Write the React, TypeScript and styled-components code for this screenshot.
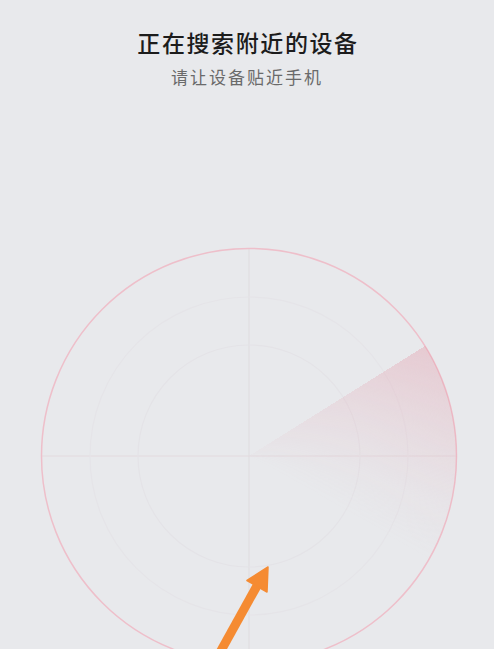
import React from "react";
import styled, { createGlobalStyle } from "styled-components";

const Global = createGlobalStyle`
  html, body { margin: 0; padding: 0; background: #e8e9ec; }
  body { font-family: "Noto Sans CJK SC", "Noto Sans", sans-serif; overflow: hidden; }
`;

const Page = styled.div`
  width: 494px;
  height: 649px;
  display: flex;
  flex-direction: column;
  align-items: center;
  background: #e8e9ec;
  overflow: hidden;
`;

const Header = styled.header`
  display: flex;
  flex-direction: column;
  align-items: center;
  gap: 7px;
  padding-top: 26px;
`;

const Title = styled.h1`
  margin: 0;
  font-size: 23px;
  line-height: 32px;
  font-weight: 500;
  letter-spacing: 1.6px;
  color: #1c1c1c;
  padding-left: 2px;
`;

const Subtitle = styled.p`
  margin: 0;
  font-size: 17px;
  line-height: 24px;
  font-weight: 400;
  letter-spacing: 2px;
  color: #6a6a6a;
`;

const Radar = styled.div`
  position: relative;
  width: 418px;
  height: 418px;
  margin-top: 158px;
  margin-left: 4px;
  flex-shrink: 0;
`;

const RadarSvg = styled.svg`
  display: block;
  width: 100%;
  height: 100%;
`;

const Sweep = styled.div`
  position: absolute;
  inset: 1px;
  border-radius: 50%;
  background: conic-gradient(
    from 58deg,
    rgba(228, 158, 172, 0.6) 0deg,
    rgba(228, 158, 172, 0.34) 22deg,
    rgba(228, 158, 172, 0.1) 45deg,
    rgba(228, 158, 172, 0) 62deg,
    rgba(228, 158, 172, 0) 360deg
  );
  -webkit-mask-image: radial-gradient(circle, rgba(0,0,0,0.05) 0%, rgba(0,0,0,0.35) 40%, rgba(0,0,0,1) 100%);
  mask-image: radial-gradient(circle, rgba(0,0,0,0.05) 0%, rgba(0,0,0,0.35) 40%, rgba(0,0,0,1) 100%);
`;

const Arrow = styled.svg`
  position: absolute;
  left: 160px;
  top: 313px;
  width: 80px;
  height: 100px;
  overflow: visible;
`;

export default function App() {
  const c = 209;
  return (
    <>
      <Global />
      <Page>
        <Header>
          <Title>正在搜索附近的设备</Title>
          <Subtitle>请让设备贴近手机</Subtitle>
        </Header>
        <Radar>
          <Sweep />
          <RadarSvg viewBox="0 0 418 418">
            <line x1={c} y1={2} x2={c} y2={416} stroke="#dfdcdf" strokeWidth={1} />
            <line x1={2} y1={c} x2={416} y2={c} stroke="#e3dade" strokeWidth={1} />
            <circle cx={c} cy={c} r={111} fill="none" stroke="#e4e3e7" strokeWidth={1.2} />
            <circle cx={c} cy={c} r={159} fill="none" stroke="#e5e4e8" strokeWidth={1.2} />
            <circle cx={c} cy={c} r={207.5} fill="none" stroke="#eebfca" strokeWidth={1.5} />
          </RadarSvg>
          <Arrow viewBox="0 0 80 100">
            <line x1={18} y1={96} x2={58} y2={24} stroke="#f58b32" strokeWidth={9} />
            <polygon points="68,7 47,20.5 67,32" fill="#f58b32" stroke="#f58b32" strokeWidth={1.5} strokeLinejoin="round" />
          </Arrow>
        </Radar>
      </Page>
    </>
  );
}
